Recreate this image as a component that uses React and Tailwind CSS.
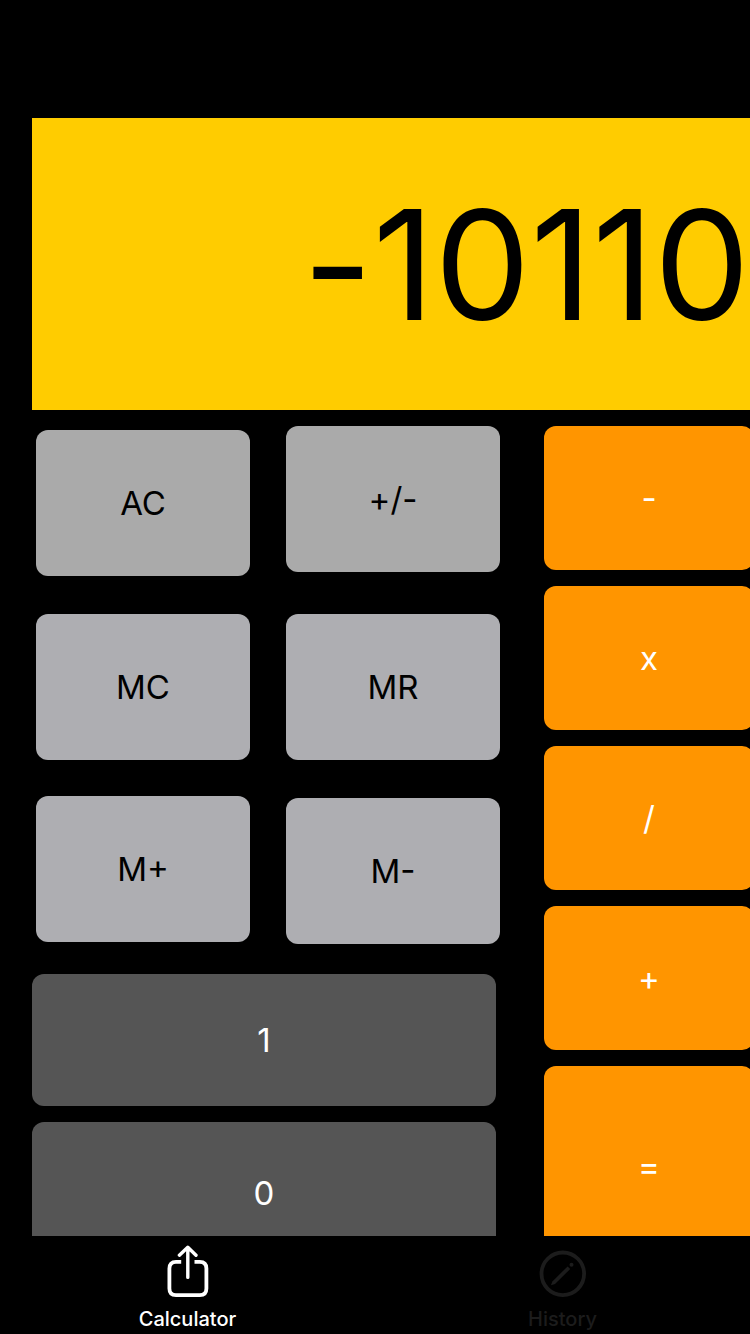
const memoryKeys = [
  { label: "AC", tone: "bg-[#aaaaaa]", cell: "pt-1" },
  { label: "+/-", tone: "bg-[#aaaaaa]", cell: "" },
  { label: "MC", tone: "bg-[#aeaeb2]", cell: "pt-[38px]" },
  { label: "MR", tone: "bg-[#aeaeb2]", cell: "pt-[38px]" },
  { label: "M+", tone: "bg-[#aeaeb2]", cell: "pt-9" },
  { label: "M-", tone: "bg-[#aeaeb2]", cell: "pt-[38px]" },
];

const operators = [
  { label: "-", size: "h-36" },
  { label: "x", size: "h-36" },
  { label: "/", size: "h-36" },
  { label: "+", size: "h-36" },
  { label: "=", size: "h-[200px]" },
];

function Key({ label, className }) {
  return (
    <button type="button" className={`flex items-center justify-center rounded-xl leading-10 ${className}`}>
      {label}
    </button>
  );
}

function ShareIcon() {
  return (
    <svg viewBox="0 0 44 54" className="h-[54px] w-11" fill="none" stroke="currentColor" strokeWidth="3.8" aria-hidden="true">
      <path d="M15.2 17.9H10Q3.4 17.9 3.4 24.5V44.5Q3.4 51.1 10 51.1H33.8Q40.4 51.1 40.4 44.5V24.5Q40.4 17.9 33.8 17.9H28.5" />
      <path d="M21.8 33.4V4M13.4 11.2L21.8 3.2L30 11.2" strokeWidth="3.4" strokeLinecap="round" strokeLinejoin="round" />
    </svg>
  );
}

function CompassIcon() {
  return (
    <svg viewBox="0 0 48 54" className="h-[54px] w-12" fill="currentColor" aria-hidden="true">
      <circle cx="23.8" cy="29.8" r="21.3" fill="none" stroke="currentColor" strokeWidth="3.8" />
      <path d="M12 41.2L13.4 37.4L28.6 22.4L31.2 25L16 40Z" />
      <circle cx="32.5" cy="20.8" r="2" />
    </svg>
  );
}

export default function App() {
  return (
    <div className="flex min-h-screen flex-col overflow-hidden bg-black font-['Inter',sans-serif]">
      <main className="flex min-h-0 flex-col pt-[118px] pl-8">
        <output className="flex h-[292px] items-center justify-end overflow-hidden bg-[#ffcc00] pt-0.5 text-[152px] leading-none text-black [font-variant-ligatures:no-contextual]">
          -10110
        </output>
        <div className="flex h-[826px] gap-11 overflow-hidden pt-4">
          <section className="flex flex-1 flex-col" aria-label="Memory and digits">
            <div className="grid grid-cols-2 gap-x-9 pl-1">
              {memoryKeys.map((key) => (
                <div key={key.label} className={key.cell}>
                  <Key label={key.label} className={`h-[146px] w-full text-[33px] text-black ${key.tone}`} />
                </div>
              ))}
            </div>
            <div className="mt-[30px] mr-1 flex flex-col gap-4">
              <Key label="1" className="h-[132px] bg-[#555555] text-[33px] text-white" />
              <Key label="0" className="h-[142px] bg-[#555555] text-[33px] text-white" />
            </div>
          </section>
          <section className="-mr-1 flex w-[210px] shrink-0 flex-col gap-4" aria-label="Operators">
            {operators.map((key) => (
              <Key key={key.label} label={key.label} className={`shrink-0 bg-[#ff9500] text-[33px] text-white ${key.size}`} />
            ))}
          </section>
        </div>
      </main>
      <nav className="grid grid-cols-2 text-xl leading-6 font-medium">
        <a href="#calculator" className="flex flex-col items-center gap-[9px] pt-2 text-white">
          <ShareIcon />
          <span>Calculator</span>
        </a>
        <a href="#history" className="flex flex-col items-center gap-[9px] pt-2 text-[#1c1c1c]">
          <CompassIcon />
          <span>History</span>
        </a>
      </nav>
    </div>
  );
}
